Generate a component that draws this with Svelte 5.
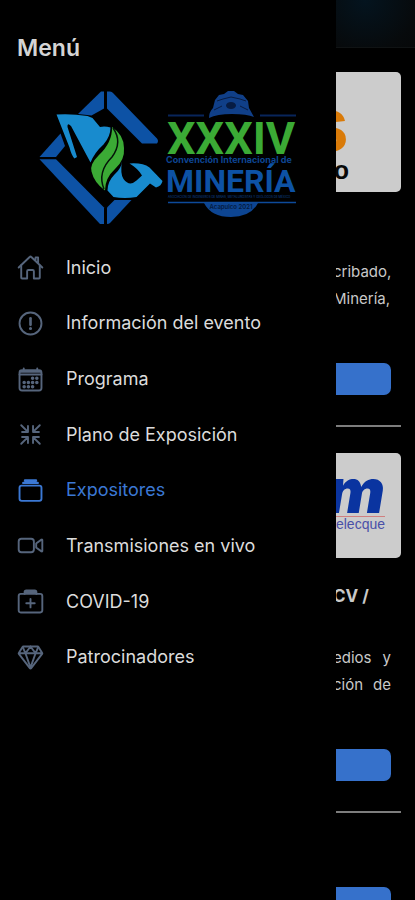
<script lang="ts">
	interface MenuItem {
		icon: string;
		label: string;
		active?: boolean;
	}

	interface Exhibitor {
		logo: 'orange' | 'blue';
		title?: string;
		lines: string[];
	}

	const items: MenuItem[] = [
		{ icon: 'home', label: 'Inicio' },
		{ icon: 'alert', label: 'Información del evento' },
		{ icon: 'calendar', label: 'Programa' },
		{ icon: 'contract', label: 'Plano de Exposición' },
		{ icon: 'albums', label: 'Expositores', active: true },
		{ icon: 'video', label: 'Transmisiones en vivo' },
		{ icon: 'medkit', label: 'COVID-19' },
		{ icon: 'diamond', label: 'Patrocinadores' }
	];

	const exhibitors: Exhibitor[] = [
		{ logo: 'orange', lines: ['cribado,', 'Minería,'] },
		{ logo: 'blue', title: 'CV /', lines: ['edios y', 'ción de'] }
	];
</script>

<div class="app">
	<main class="page">
		<header class="toolbar"></header>
		{#each exhibitors as exhibitor}
			<article class="exhibitor">
				{#if exhibitor.logo === 'orange'}
					<div class="card card-orange">
						<span class="orange-name">s</span>
						<span class="orange-sub">o</span>
					</div>
				{:else}
					<div class="card card-blue">
						<span class="blue-name">m</span>
						<span class="blue-sub">elecque</span>
					</div>
				{/if}
				<div class="details">
					{#if exhibitor.title}
						<h2>{exhibitor.title}</h2>
					{/if}
					<div class="description">
						{#each exhibitor.lines as line}
							<p>{line}</p>
						{/each}
					</div>
				</div>
				<button class="action" aria-label={exhibitor.lines[0]}></button>
			</article>
		{/each}
		<button class="action last" aria-label="Expositores"></button>
	</main>

	<aside class="drawer">
		<h1>Menú</h1>

		<svg class="logo" viewBox="38 86 260 140" role="img" aria-label="XXXIV Convención Internacional de Minería">
			<g fill="#0d52a5">
				<path d="M107 91.5h3q2 0 3 1.500L157 138.500q2 2.500 0 5h-15L107 108.500z" />
				<path d="M104 91.500h-3L78 114l13.500 1.500L104 108.500z" />
				<path d="M39.500 157L60.500 133.500L65 146L56 157z" />
				<path d="M39.500 159.300H56L104 207.500V224h-4z" />
				<path d="M107 207.500l7.500-7.500h17L110 223q-1 1-3 1z" />
			</g>
			<g fill="#188bce">
				<path d="M56.500 114.500q15-1 31 1.500l5 2 7.500 9q5-1 10.500 0.500q0 9-7 17q-9 8-13 18L71 126q-4-4-3.500 1L77 157l-2.500 1.500q-3-3-5-11z" />
				<path d="M122 161q-2 13 1.500 18q6 8 13 1.500l5.500-5q-4-7-12.500-12q13-1 20 4l13 13.500q-1 5-6.500 6.500l-6-4-13.500 13.500q-12 2-23 0l-6-6.500q0-9 7-16q7-6 7.500-13.500z" />
			</g>
			<path fill="#3baa35" d="M112 127q12 8 12 21q1 12-9 21q-10 9-10 21.500q-11-8-13.500-19q-2-7 7-16q14-13 13.500-28.500z" />
			<path fill="none" stroke="#051409" stroke-width="1.500" d="M113 128q10 14-1 29q-15 15-8 32" />
			<g>
				<path fill="#103f88" d="M209 118q0-6 4-10l2-8 4-5 5-1 4-3h6l4 3 5 1 5 6 1 7 5 9q-7-3-22-3t-23 4z" />
				<ellipse cx="231" cy="105.500" rx="5" ry="3.500" fill="#071c43" />
				<path stroke="#071c43" fill="none" d="M217 101l6-2 8-2 9 2 6 2M214 110l8-4M248 110l-8-4" />
				<path stroke="#08255a" stroke-width="2" d="M168 115.500h36M260 115.500h36" />
				<text class="numeral" x="167" y="154">XXXIV</text>
				<text class="convention" x="166" y="163">Convención Internacional de</text>
				<text class="mineria" x="166" y="192">MINERÍA</text>
				<text class="association" x="168" y="198">ASOCIACIÓN DE INGENIEROS DE MINAS, METALURGISTAS Y GEÓLOGOS DE MÉXICO</text>
				<path stroke="#0d4a9a" stroke-width="1.500" d="M168 202.500h128" />
				<path fill="#0d4592" d="M204 203h54q-7 14-27 14t-27-14z" />
				<text class="place" x="231" y="209">Acapulco 2021</text>
			</g>
		</svg>

		<nav>
			{#each items as item}
				<a href="#{item.icon}" class:active={item.active}>
					<svg class="icon" viewBox="0 0 512 512" aria-hidden="true">
						{#if item.icon === 'home'}
							<path d="M80 212v236a16 16 0 0016 16h96V328a24 24 0 0124-24h80a24 24 0 0124 24v136h96a16 16 0 0016-16V212" />
							<path d="M480 256L266.890 52c-5-5.280-16.690-5.340-21.780 0L32 256M400 179V64h-48v69" />
						{:else if item.icon === 'alert'}
							<circle cx="256" cy="256" r="208" />
							<path d="M256 156v126" stroke-width="50" />
							<circle class="solid" cx="256" cy="350" r="12" />
						{:else if item.icon === 'calendar'}
							<rect x="48" y="80" width="416" height="384" rx="48" />
							<path d="M128 48v32M384 48v32M464 160H48" />
							<path d="M64 112h384" />
							<g class="solid">
								<circle cx="296" cy="232" r="16" />
								<circle cx="376" cy="232" r="16" />
								<circle cx="296" cy="312" r="16" />
								<circle cx="376" cy="312" r="16" />
								<circle cx="136" cy="312" r="16" />
								<circle cx="216" cy="312" r="16" />
								<circle cx="136" cy="392" r="16" />
								<circle cx="216" cy="392" r="16" />
								<circle cx="296" cy="392" r="16" />
							</g>
						{:else if item.icon === 'contract'}
							<path d="M304 416V304h112M314.200 314.230L432 432M208 96v112H96M197.800 197.770L80 80M416 208H304V96M314.230 197.800L432 80M96 304h112v112M197.770 314.200L80 432" />
						{:else if item.icon === 'albums'}
							<rect x="48" y="164" width="416" height="288" rx="40" />
							<path d="M152 68h208M120 112h272" stroke-width="46" />
						{:else if item.icon === 'video'}
							<path d="M268 384H84a52 52 0 01-52-52V180a52 52 0 0152-52h184a52 52 0 0152 52v152a52 52 0 01-52 52z" />
							<path d="M464 367l-96-68a8 8 0 01-4-7v-72a8 8 0 014-7l96-68a10 10 0 0116 8v206a10 10 0 01-16 8z" />
						{:else if item.icon === 'medkit'}
							<rect x="32" y="112" width="448" height="352" rx="40" />
							<path d="M144 112V80a32 32 0 0132-32h160a32 32 0 0132 32v32M144 84h224M256 208v160M336 288H176" />
						{:else}
							<path d="M35.420 188.210l207.750 269.460a16.170 16.170 0 0025.660 0l207.750-269.460a16.520 16.520 0 00.950-18.750L407.060 55.710A16.220 16.220 0 00393.270 48H118.730a16.220 16.220 0 00-13.790 7.710L34.470 169.460a16.520 16.520 0 00.950 18.750zM48 176h416" />
							<path d="M400 64l-48 112-96-128M112 64l48 112 96-128M256 448l-96-272M256 448l96-272" />
						{/if}
					</svg>
					<span>{item.label}</span>
				</a>
			{/each}
		</nav>
	</aside>
</div>

<style>
	:global(body) {
		margin: 0;
		background: #000;
	}

	.app {
		position: relative;
		height: 100vh;
		overflow: hidden;
		background: #000;
		color: #c9c9c9;
		font-family: Inter, 'Liberation Sans', sans-serif;
	}

	.page {
		display: flex;
		flex-direction: column;
	}

	.toolbar {
		height: 47px;
		border-bottom: 1px solid #101314;
		background: radial-gradient(circle at 88% 0, #04141f, #070a0c 14%, #060606 24%);
	}

	.exhibitor {
		display: flex;
		flex-direction: column;
		margin: 0 14px;
		padding-bottom: 30px;
		border-bottom: 2px solid #7d7d7d;
	}

	.card {
		display: flex;
		flex-direction: column;
		align-items: flex-end;
		box-sizing: border-box;
		margin-top: 24px;
		border-radius: 5px;
		background: #ccc;
		font-family: 'Liberation Sans', sans-serif;
		font-weight: 700;
	}

	.card-orange {
		height: 120px;
		padding: 20px 52px 0 0;
	}

	.orange-name {
		color: #d97a08;
		font-size: 76px;
		line-height: 66px;
	}

	.orange-sub {
		color: #080808;
		font-size: 25px;
		line-height: 24px;
	}

	.card-blue {
		height: 105px;
		margin-top: 26px;
		padding: 13px 16px 0 0;
	}

	.blue-name {
		color: #0a34a0;
		font-family: Inter, sans-serif;
		font-size: 62px;
		font-style: italic;
		font-weight: 900;
		line-height: 50px;
	}

	.blue-sub {
		width: 60px;
		border-top: 1px solid #d08080;
		color: #4a50a8;
		font-size: 14px;
		font-weight: 400;
		line-height: 14px;
		text-align: right;
	}

	.details {
		display: flex;
		flex-direction: column;
		align-items: flex-end;
		padding: 66px 10px 51px 0;
	}

	.card-blue + .details {
		padding-top: 24px;
	}

	h2 {
		width: 58px;
		margin: 0 0 34px;
		font-size: 17px;
		line-height: 28px;
	}

	.description {
		width: 58px;
		font-size: 15px;
		line-height: 27px;
	}

	.description p {
		margin: 0;
		text-align-last: justify;
		white-space: nowrap;
	}

	.action {
		height: 32px;
		margin: 0 10px;
		border: 0;
		border-radius: 7px;
		background: #3671cb;
	}

	.last {
		margin: 74px 24px 0;
	}

	.drawer {
		position: absolute;
		inset: 0 auto 0 0;
		display: flex;
		flex-direction: column;
		width: 81%;
		background: #000;
	}

	h1 {
		margin: 32px 17px 22px;
		color: #d4d4d4;
		font-size: 23px;
		font-weight: 600;
		line-height: 32px;
	}

	.logo {
		flex: none;
		align-self: center;
		width: 260px;
		height: 140px;
	}

	.numeral,
	.mineria {
		font-family: Roboto, sans-serif;
		font-weight: 700;
	}

	.numeral {
		fill: #3baa35;
		font-size: 45px;
	}

	.mineria {
		fill: #0d52a5;
		font-size: 32px;
	}

	.convention {
		fill: #0d4592;
		font-size: 9px;
		font-weight: 700;
	}

	.association {
		fill: #0d4592;
		font-size: 3px;
	}

	.place {
		fill: #041a3d;
		font-size: 6px;
		font-weight: 600;
		text-anchor: middle;
	}

	nav {
		display: grid;
		grid-auto-rows: 1fr;
		height: 445px;
		margin-top: 14px;
	}

	nav a {
		display: flex;
		align-items: center;
		gap: 22px;
		padding-left: 17px;
		color: #dcdcdc;
		font-size: 18px;
		line-height: 24px;
		text-decoration: none;
	}

	.icon {
		width: 27px;
		height: 27px;
		fill: none;
		stroke: #56657c;
		stroke-width: 36;
		stroke-linecap: round;
		stroke-linejoin: round;
	}

	.solid {
		fill: #56657c;
	}

	.active {
		color: #3b78d4;
	}

	.active .icon {
		stroke: #3b78d4;
	}
</style>
